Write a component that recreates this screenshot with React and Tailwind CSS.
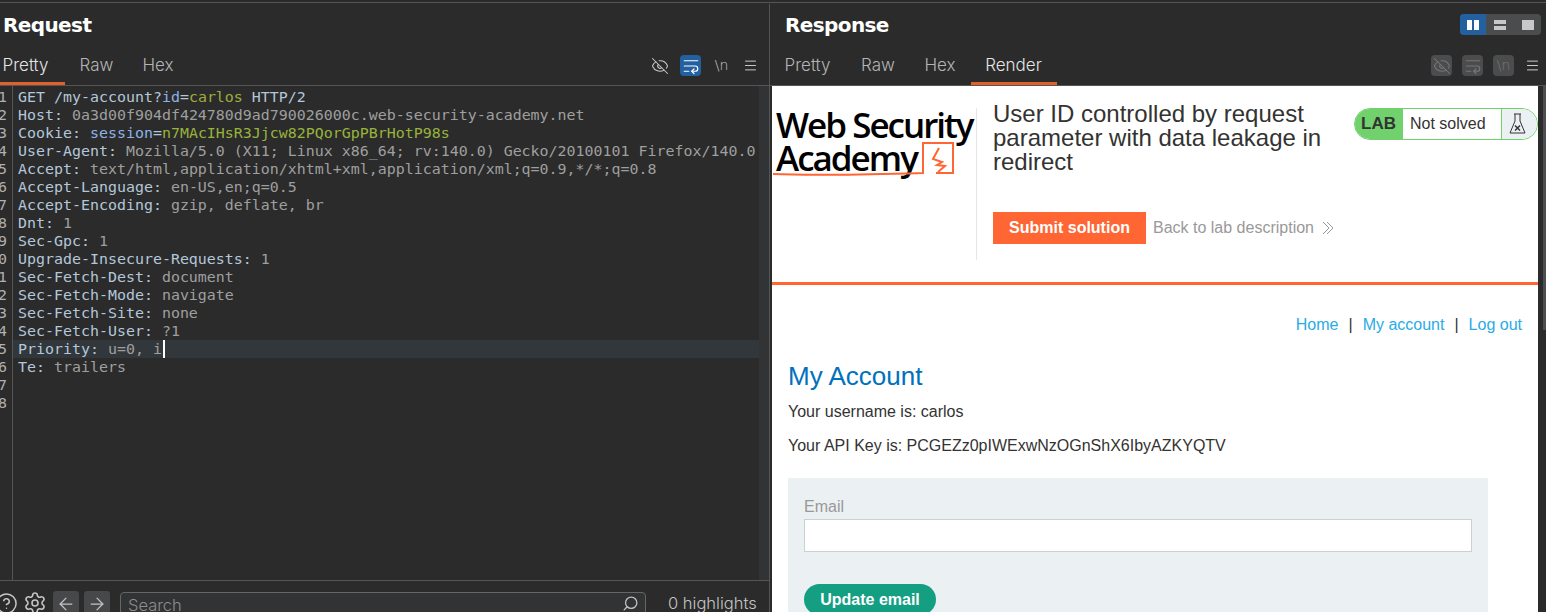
import React from 'react';
import { ArrowLeft, ArrowRight, EyeOff, Search, Settings, CircleHelp, WrapText, Menu } from 'lucide-react';

const K = 'text-[#b3c7da]';
const V = 'text-[#9f9f9f]';

const lines = [
  [['GET /my-account?', K], ['id', 'text-[#8fb2e6]'], ['=', K], ['carlos', 'text-[#9fab3e]'], [' HTTP/2', K]],
  [['Host: ', K], ['0a3d00f904df424780d9ad790026000c.web-security-academy.net', V]],
  [['Cookie: ', K], ['session', 'text-[#8fb2e6]'], ['=', K], ['n7MAcIHsR3Jjcw82PQorGpPBrHotP98s', 'text-[#98b33c]']],
  [['User-Agent: ', K], ['Mozilla/5.0 (X11; Linux x86_64; rv:140.0) Gecko/20100101 Firefox/140.0', V]],
  [['Accept: ', K], ['text/html,application/xhtml+xml,application/xml;q=0.9,*/*;q=0.8', V]],
  [['Accept-Language: ', K], ['en-US,en;q=0.5', V]],
  [['Accept-Encoding: ', K], ['gzip, deflate, br', V]],
  [['Dnt: ', K], ['1', V]],
  [['Sec-Gpc: ', K], ['1', V]],
  [['Upgrade-Insecure-Requests: ', K], ['1', V]],
  [['Sec-Fetch-Dest: ', K], ['document', V]],
  [['Sec-Fetch-Mode: ', K], ['navigate', V]],
  [['Sec-Fetch-Site: ', K], ['none', V]],
  [['Sec-Fetch-User: ', K], ['?1', V]],
  [['Priority: ', K], ['u=0, i', V]],
  [['Te: ', K], ['trailers', V]],
  [],
  [],
];

function Tab({ label, active, w }) {
  return (
    <div className={`h-[30px] flex items-center justify-center border-b-[3px] pb-[5px] ${w} ${active ? 'border-[#e2602c] text-[#e4e4e4]' : 'border-transparent text-[#b4b4b4]'}`}>
      {label}
    </div>
  );
}

function ToolBtn({ children, className }) {
  return <div className={`w-[21px] h-[21px] rounded-[4px] flex items-center justify-center ${className}`}>{children}</div>;
}

function RequestPane() {
  return (
    <div className="w-[770px] shrink-0 flex flex-col border-r border-[#555] h-full">
      <div className="h-[51px] shrink-0 pl-[3px] pt-[6px] text-[20px] font-bold text-white font-['DejaVu_Sans'] tracking-[-0.6px]">Request</div>
      <div className="h-[30px] shrink-0 flex items-start border-b border-[#555] box-content text-[17px] font-light">
        <Tab label="Pretty" active w="w-[65px] pr-[14px]" />
        <Tab label="Raw" w="w-[63px]" />
        <Tab label="Hex" w="w-[60px]" />
        <div className="ml-auto flex items-center gap-[10px] pr-[11px] text-[#c8c8c8]">
          <ToolBtn><EyeOff size={18} strokeWidth={1.4} /></ToolBtn>
          <ToolBtn className="bg-[#23609f]"><WrapText size={18} strokeWidth={1.6} className="text-white" /></ToolBtn>
          <ToolBtn className="font-['DejaVu_Sans'] text-[14px]">\n</ToolBtn>
          <Menu size={15} strokeWidth={1.6} className="ml-[1px]" />
        </div>
      </div>
      <div className="flex-1 flex min-h-0 font-['DejaVu_Sans_Mono'] text-[14.95px] leading-[18px] pt-[2px]">
        <div className="w-[13px] shrink-0 border-r border-[#555] -mt-[2px] pt-[2px] text-[#b0b0b0] overflow-hidden">
          {lines.map((_, i) => (
            <div key={i} className="h-[18px] flex justify-end pr-[5px]">{i + 1}</div>
          ))}
        </div>
        <div className="flex-1 min-w-0">
          {lines.map((segs, i) => (
            <div key={i} className={`h-[18px] pl-[5px] whitespace-pre flex ${i === 14 ? 'bg-[#32373b]' : ''}`}>
              {segs.map(([t, c], j) => <span key={j} className={c}>{t}</span>)}
              {i === 14 && <span className="w-[2px] bg-white ml-[1px]" />}
            </div>
          ))}
        </div>
        <div className="w-[10px] shrink-0 bg-[#323334] -mt-[2px]" />
      </div>
      <div className="h-[32px] shrink-0 border-t border-[#555] flex items-start text-[#c4c4c4] overflow-hidden relative">
        <CircleHelp size={23} strokeWidth={1.6} className="mt-[11px] -ml-[5px] shrink-0" />
        <Settings size={24} strokeWidth={1.6} className="mt-[10px] ml-[5px] shrink-0" />
        <div className="ml-[6px] mt-[10px] w-[26px] h-[30px] bg-[#46484a] rounded-[3px] flex justify-center pt-[3px] shrink-0"><ArrowLeft size={20} strokeWidth={1.5} /></div>
        <div className="ml-[5px] mt-[10px] w-[26px] h-[30px] bg-[#46484a] rounded-[3px] flex justify-center pt-[3px] shrink-0"><ArrowRight size={20} strokeWidth={1.5} /></div>
        <div className="ml-[10px] mt-[11px] w-[526px] h-[30px] bg-[#323335] border border-[#666] rounded-[4px] flex items-start justify-between pl-[7px] pr-[6px] text-[16.5px] font-light text-[#8e8e8e] shrink-0">
          <span>Search</span>
          <Search size={17} strokeWidth={1.8} className="text-[#c4c4c4] mt-[2px] -scale-x-100" />
        </div>
        <span className="ml-[22px] mt-[10px] text-[16.5px] font-light whitespace-nowrap">0 highlights</span>
      </div>
    </div>
  );
}

function LabBadge() {
  return (
    <div className="flex h-[32px] w-[184px] shrink-0 rounded-full border border-[#70d16d] overflow-hidden font-['Liberation_Sans'] text-[#333332]">
      <div className="w-[48px] bg-[#70d16d] flex items-center justify-end pr-[7px] font-bold text-[17px]">LAB</div>
      <div className="flex-1 bg-white flex items-center pl-[7px] text-[16px]">Not solved</div>
      <div className="w-[36px] bg-[#ebf0f2] border-l border-[#70d16d] flex items-center justify-center pr-[5px]">
        <svg width="17" height="22" viewBox="0 0 17 22" fill="none" stroke="#333" strokeWidth="1">
          <path d="M5 1h7M6 1v7L1 20h15L11 8V1" />
          <path d="M6 12.5l5 5M11 12.5l-5 5" strokeWidth="1.5" />
        </svg>
      </div>
    </div>
  );
}

function Logo() {
  return (
    <div className="relative w-[205px] h-[152px] shrink-0 border-r border-[#e6e6e6] pl-[4px] font-['Open_Sans'] font-semibold text-black text-[35px] leading-[33px] tracking-[-2px] whitespace-nowrap">
      <div>Web Security</div>
      <div>Academy</div>
      <svg className="absolute left-0 top-[30px]" width="190" height="45" viewBox="0 0 190 45" fill="none" stroke="#ff6633" strokeWidth="2">
        <path d="M1 36C50 38 110 36 151 35V5H181V35H164" />
        <path d="M167 10l-6 11 9 3-5 3 8 1-7 6" strokeWidth="2" />
      </svg>
    </div>
  );
}

function ResponsePane() {
  return (
    <div className="flex-1 min-w-0 flex flex-col h-full">
      <div className="h-[51px] shrink-0 flex items-start justify-between pl-[15px] pr-[5px] pt-[6px] text-[20px] font-bold text-white font-['DejaVu_Sans'] tracking-[-0.6px]">
        <span>Response</span>
        <div className="flex h-[21px] w-[81px] mt-[4px] rounded-[4px] overflow-hidden bg-[#4b4c4e]">
          <div className="w-[26px] bg-[#23609f] flex items-center justify-center">
            <svg width="12" height="10" viewBox="0 0 12 10" fill="#fff"><path d="M0 0h5v10H0zM7 0h5v10H7z" /></svg>
          </div>
          <div className="w-[28px] flex items-center justify-center">
            <svg width="12" height="10" viewBox="0 0 12 10" fill="#c8c8c8"><path d="M0 0h12v4H0zM0 6h12v4H0z" /></svg>
          </div>
          <div className="flex-1 flex items-center justify-center">
            <svg width="12" height="10" viewBox="0 0 12 10" fill="#c8c8c8"><path d="M0 0h12v10H0z" /></svg>
          </div>
        </div>
      </div>
      <div className="h-[30px] shrink-0 flex items-start border-b border-[#555] box-content text-[17px] font-light">
        <Tab label="Pretty" w="w-[75px]" />
        <Tab label="Raw" w="w-[66px]" />
        <Tab label="Hex" w="w-[60px] pr-[2px]" />
        <Tab label="Render" active w="w-[86px] pr-[1px]" />
        <div className="ml-auto flex items-center gap-[10px] pr-[6px] text-[#777]">
          <ToolBtn className="bg-[#4b4c4e]"><EyeOff size={18} strokeWidth={1.4} /></ToolBtn>
          <ToolBtn className="bg-[#4b4c4e]"><WrapText size={18} strokeWidth={1.6} /></ToolBtn>
          <ToolBtn className="bg-[#4b4c4e] font-['DejaVu_Sans'] text-[14px]">\n</ToolBtn>
          <Menu size={15} strokeWidth={1.6} className="text-[#ccc] ml-[1px]" />
        </div>
      </div>
      <div className="flex-1 min-h-0 flex pl-[2px]">
        <div className="flex-1 min-w-0 bg-white font-['Liberation_Sans'] text-[16px] text-[#333332] overflow-hidden">
          <div className="h-[199px] border-b-[3px] border-[#ff6633] pt-[22px] flex">
            <Logo />
            <div className="flex-1 min-w-0 pl-[16px]">
              <div className="flex justify-between">
                <h2 className="w-[345px] text-[24px] leading-[24px] -mt-[6px]">User ID controlled by request parameter with data leakage in redirect</h2>
                <LabBadge />
              </div>
              <div className="flex items-center mt-[38px]">
                <div className="w-[153px] h-[32px] bg-[#ff6633] text-white font-bold flex items-center justify-center">Submit solution</div>
                <span className="ml-[7px] text-[#999]">Back to lab description</span>
                <svg className="ml-[7px]" width="14" height="14" viewBox="0 0 14 14" fill="none" stroke="#999"><path d="M2 1l6 6-6 6M6 1l6 6-6 6" /></svg>
              </div>
            </div>
          </div>
          <div className="pl-[16px] pr-[16px]">
            <div className="flex justify-end mt-[31px] h-[18px] items-center">
              <span className="text-[#29ace5]">Home</span>
              <span className="mx-[10px]">|</span>
              <span className="text-[#29ace5]">My account</span>
              <span className="mx-[10px]">|</span>
              <span className="text-[#29ace5]">Log out</span>
            </div>
            <h1 className="text-[26px] leading-[30px] text-[#0071bc] mt-[27px]">My Account</h1>
            <p className="mt-[12px] leading-[18px]">Your username is: carlos</p>
            <p className="mt-[16px] leading-[18px]">Your API Key is: PCGEZz0pIWExwNzOGnShX6IbyAZKYQTV</p>
            <div className="mt-[23px] w-[700px] bg-[#ebf0f2] px-[16px] pt-[20px] pb-[20px]">
              <div className="text-[#999] leading-[18px]">Email</div>
              <div className="h-[33px] mt-[3px] bg-white border border-[#cbd0d1]" />
              <div className="mt-[32px] w-[132px] h-[31px] rounded-full bg-[#149e82] text-white font-bold flex items-center justify-center">Update email</div>
            </div>
          </div>
        </div>
        <div className="w-[8px] shrink-0 bg-[#2b2b2b] flex justify-end">
          <div className="w-[3px] h-[244px] bg-[#4d4e50]" />
        </div>
      </div>
    </div>
  );
}

export default function App() {
  return (
    <div className="h-[612px] w-[1546px] overflow-hidden bg-[#2b2b2b] font-['Inter',sans-serif] flex flex-col">
      <div className="h-[1px] shrink-0 mt-[2px] mb-[1px] bg-[#555]" />
      <div className="flex-1 min-h-0 flex">
        <RequestPane />
        <ResponsePane />
      </div>
    </div>
  );
}
